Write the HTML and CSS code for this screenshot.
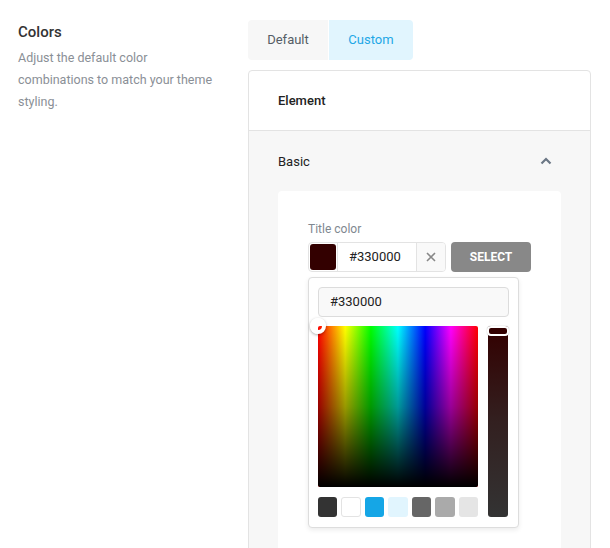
FILE: index.html
```html
<!DOCTYPE html>
<html>
<head>
<meta charset="utf-8">
<link rel="stylesheet" href="styles.css">
</head>
<body>
<div class="page">
  <div class="intro">
    <h2 class="title">Colors</h2>
    <p class="desc">Adjust the default color combinations to match your theme styling.</p>
  </div>
  <div class="main">
    <div class="tabs">
      <div class="tab">Default</div>
      <div class="tab active">Custom</div>
    </div>
    <div class="card">
      <div class="row-element">Element</div>
      <div class="section">
        <div class="section-head">
          <span>Basic</span>
          <svg class="chev" width="12" height="8" viewBox="0 0 12 8"><path d="M1.5 6.5 L6 2 L10.5 6.5" fill="none" stroke="#6b7785" stroke-width="2.2"/></svg>
        </div>
        <div class="inner">
          <div class="label">Title color</div>
          <div class="field-row">
            <div class="input-group">
              <div class="swatch-cell"><div class="swatch-main"></div></div>
              <div class="hex">#330000</div>
              <div class="clear">
                <svg width="10" height="10" viewBox="0 0 10 10"><path d="M1 1 L9 9 M9 1 L1 9" stroke="#888" stroke-width="1.6"/></svg>
              </div>
            </div>
            <div class="btn-select">SELECT</div>
          </div>
          <div class="picker">
            <div class="picker-input">#330000</div>
            <div class="picker-body">
              <div class="picker-left">
                <div class="spectrum">
                  <div class="spectrum-dark"></div>
                  <div class="handle"></div>
                </div>
                <div class="swatches">
                  <div class="sw c1"></div>
                  <div class="sw c2"></div>
                  <div class="sw c3"></div>
                  <div class="sw c4"></div>
                  <div class="sw c5"></div>
                  <div class="sw c6"></div>
                  <div class="sw c7"></div>
                </div>
              </div>
              <div class="bar">
                <div class="bar-handle"></div>
              </div>
            </div>
          </div>
        </div>
      </div>
    </div>
  </div>
</div>
</body>
</html>
```

FILE: styles.css
```css
* { box-sizing: border-box; }
html, body { margin: 0; padding: 0; background: #fff; }
body { font-family: Roboto, "Liberation Sans", sans-serif; color: #333; overflow: hidden; height: 548px; }
.page { display: flex; padding: 20px 0 0 18px; }
.intro { width: 230px; }
.title { margin: 3px 0 0; font-size: 15px; font-weight: 500; color: #333; line-height: 18px; }
.desc { margin: 6px 0 0; font-size: 12.5px; line-height: 22px; color: #8a8f96; width: 205px; }
.main { width: 343px; }
.tabs { display: flex; height: 40px; }
.tab { height: 40px; line-height: 40px; font-size: 13px; color: #555d66; background: #f7f7f7; border-radius: 4px 0 0 4px; width: 80px; text-align: center; }
.tab.active { background: #e1f5fe; color: #1ea7e6; border-radius: 0 4px 4px 0; margin-left: 1px; width: 84px; }
.card { margin-top: 10px; border: 1px solid #e3e3e3; border-radius: 4px; height: 520px; overflow: hidden; }
.row-element { height: 60px; line-height: 60px; padding-left: 29px; font-size: 13px; font-weight: 500; color: #222; border-bottom: 1px solid #e3e3e3; }
.section { background: #f7f7f7; padding: 0 29px; height: 100%; }
.section-head { height: 60px; display: flex; align-items: center; justify-content: space-between; font-size: 13px; color: #222; padding-right: 9px; }
.chev { display: block; }
.inner { background: #fff; border-radius: 4px; padding: 31px 30px 0; height: 400px; }
.label { font-size: 12px; color: #7f8890; line-height: 14px; }
.field-row { display: flex; margin-top: 6px; gap: 5px; }
.input-group { display: flex; width: 138px; height: 30px; border: 1px solid #e3e3e3; border-radius: 4px; overflow: hidden; }
.swatch-cell { width: 29px; padding: 1px; border-right: 1px solid #e3e3e3; }
.swatch-main { width: 100%; height: 100%; background: #330000; border-radius: 3px; }
.hex { width: 79px; line-height: 28px; padding-left: 11px; font-size: 13px; color: #222; background: #fff; border-right: 1px solid #e3e3e3; }
.clear { flex: 1; display: flex; align-items: center; justify-content: center; background: #f9f9f9; }
.btn-select { width: 80px; height: 30px; line-height: 30px; text-align: center; background: #888; color: #fff; font-size: 12px; font-weight: 700; border-radius: 4px; }
.picker { margin-top: 5px; width: 211px; height: 251px; border: 1px solid #ddd; border-radius: 4px; background: #fff; padding: 9px; box-shadow: 0 2px 5px rgba(0,0,0,0.08); }
.picker-input { height: 30px; line-height: 28px; border: 1px solid #dcdcdc; border-radius: 4px; background: #f9f9f9; padding-left: 11px; font-size: 13px; color: #222; }
.picker-body { display: flex; gap: 10px; margin-top: 9px; }
.picker-left { width: 160px; }
.spectrum { position: relative; height: 161px; border-radius: 2px; background: linear-gradient(to right, #f00 0%, #ff0 17%, #0f0 33%, #0ff 50%, #00f 67%, #f0f 83%, #f00 100%); }
.spectrum-dark { position: absolute; inset: 0; border-radius: 2px; background: linear-gradient(to bottom, rgba(0,0,0,0) 0%, rgba(0,0,0,0.4) 50%, #000 100%); }
.handle { position: absolute; left: -8px; top: -8px; width: 16px; height: 16px; border-radius: 50%; background: transparent; border: 4px solid #fff; box-shadow: 0 1px 3px rgba(0,0,0,0.35); }
.swatches { display: grid; grid-template-columns: repeat(7, 1fr); gap: 4px; margin-top: 10px; }
.sw { height: 20px; border-radius: 3px; }
.c1 { background: #333; }
.c2 { background: #fff; border: 1px solid #e3e3e3; }
.c3 { background: #15a6e6; }
.c4 { background: #e1f5fe; }
.c5 { background: #666; }
.c6 { background: #aaa; }
.c7 { background: #e5e5e5; }
.bar { position: relative; width: 20px; height: 191px; border-radius: 3px; background: linear-gradient(to bottom, #330000 0%, #332020 50%, #333 100%); }
.bar-handle { position: absolute; left: -1px; top: 0; width: 22px; height: 10px; border: 2px solid #fff; border-radius: 4px; background: #330000; box-shadow: 0 0 1px rgba(0,0,0,0.4); }
```
